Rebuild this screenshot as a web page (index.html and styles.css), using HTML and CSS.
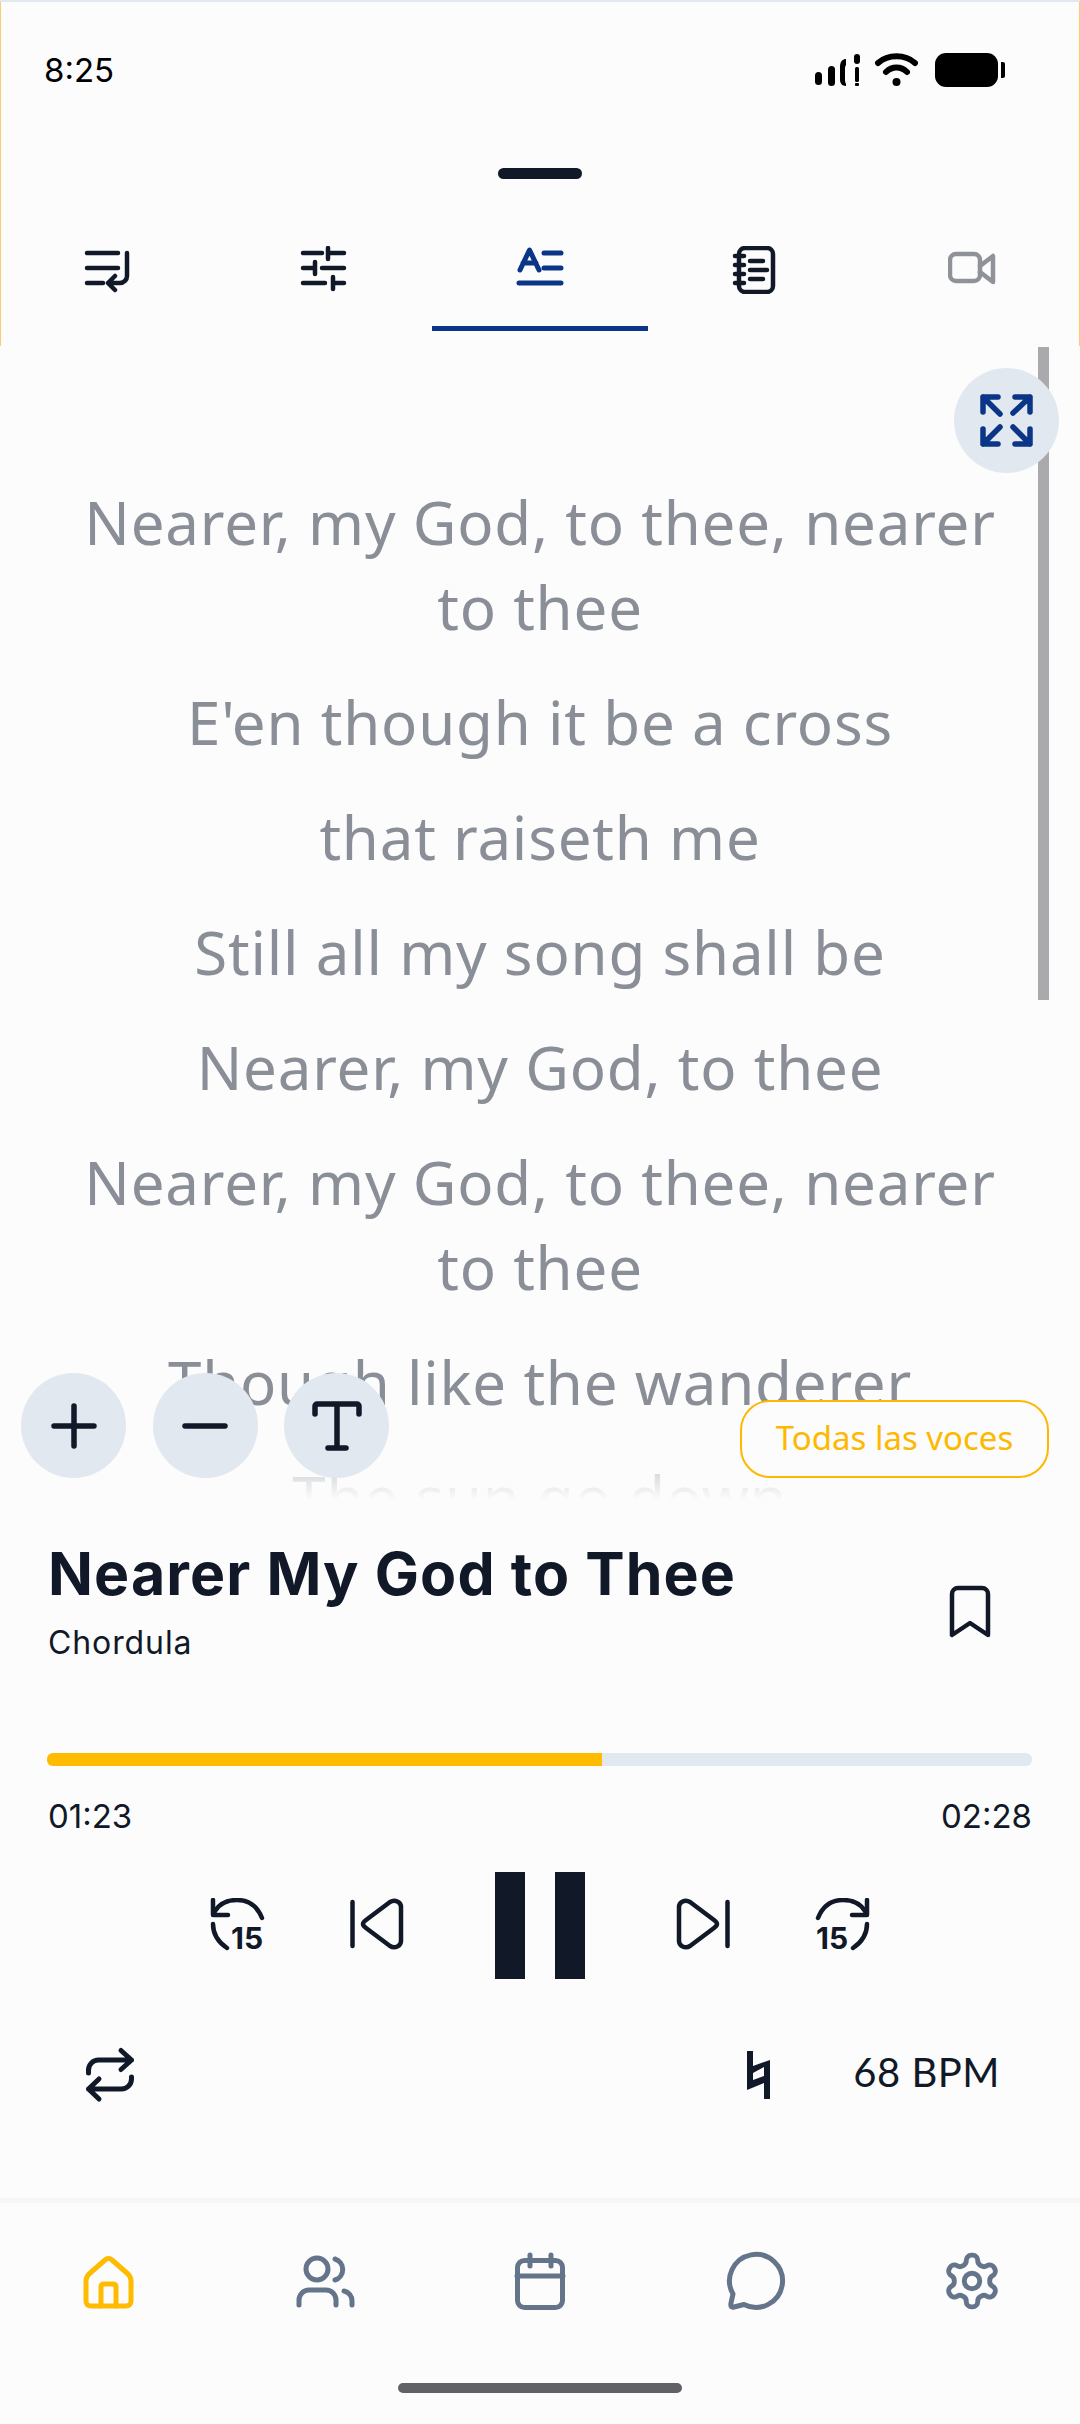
FILE: index.html
```html
<!DOCTYPE html>
<html lang="en">

<head>
    <meta charset="UTF-8">
    <meta name="viewport" content="width=device-width, initial-scale=1.0">
    <title>Nearer My God to Thee</title>
    <link rel="stylesheet" href="styles.css">
</head>

<body>
    <div class="phone">
        <div class="top">
            <div class="status">
                <span class="clock">8:25</span>
                <div class="status-icons">
                    <svg width="46" height="34" viewBox="0 0 46 34" fill="#000">
                        <rect x="1" y="19" width="7" height="13" rx="3.5"/>
                        <rect x="14" y="13" width="7" height="20" rx="3.5"/>
                        <path d="M26 14c0-6 3-8 6-8v6c-1 1-1 3-1 5v9c0 2 0 3 1 5v2c-4 0-6-3-6-6z"/>
                        <rect x="40" y="1" width="6" height="10" rx="3"/>
                        <rect x="41" y="14" width="4" height="15" rx="1.5"/>
                        <rect x="41" y="30" width="4" height="3" rx="1"/>
                    </svg>
                    <svg width="43" height="34" viewBox="0 0 43 34" fill="none" stroke="#000" stroke-linecap="round">
                        <path d="M3 10C13 1 30 1 40 10" stroke-width="6"/>
                        <path d="M11 19C17 13 26 13 32 19" stroke-width="6"/>
                        <circle cx="21.5" cy="29" r="4" fill="#000" stroke="none"/>
                    </svg>
                    <div class="battery"><div class="battery-body"></div><div class="battery-nub"></div></div>
                </div>
            </div>
            <div class="handle"></div>
            <div class="tabs">
                <div class="tab">
                    <svg width="48" height="48" viewBox="0 0 48 48" class="line-icon">
                        <path d="M3 7H34M3 22H34M3 37H19M43 7V30a7 7 0 0 1-7 7H24M31 30l-7 7 7 7"/>
                    </svg>
                </div>
                <div class="tab">
                    <svg width="48" height="48" viewBox="0 0 48 48" class="line-icon">
                        <path d="M3 7H22M28 7H44M28 2V13M3 22H15M15 16V28M22 22H44M3 37H25M33 31V43M33 37H44"/>
                    </svg>
                </div>
                <div class="tab active">
                    <svg width="48" height="48" viewBox="0 0 48 48" class="line-icon blue">
                        <path d="M4 24L13.5 4 23 24M7 17H20M28 7H45M28 22H45M3 37H45"/>
                    </svg>
                </div>
                <div class="tab">
                    <svg width="48" height="48" viewBox="0 0 48 48" class="line-icon">
                        <rect x="7" y="2" width="34" height="44" rx="6"/>
                        <path d="M3 10H12M3 19H12M3 28H12M3 37H12M18 15H31M18 24H35M18 33H31"/>
                    </svg>
                </div>
                <div class="tab">
                    <svg width="48" height="48" viewBox="0 0 48 48" class="line-icon grey">
                        <rect x="2" y="8" width="30" height="27" rx="6"/>
                        <path d="M32 20L45 10V36L32 26"/>
                    </svg>
                </div>
            </div>
        </div>

        <div class="lyrics">
            <div class="lyrics-text">
                <p>Nearer, my God, to thee, nearer to thee</p>
                <p>E'en though it be a cross</p>
                <p>that raiseth me</p>
                <p>Still all my song shall be</p>
                <p>Nearer, my God, to thee</p>
                <p>Nearer, my God, to thee, nearer to thee</p>
                <p>Though like the wanderer</p>
                <p>The sun go down</p>
            </div>
            <div class="fade"></div>
            <div class="scrollbar"></div>
            <div class="round expand">
                <svg width="53" height="53" viewBox="0 0 53 53" fill="none" stroke="#0b3587" stroke-width="5.5" stroke-linecap="round" stroke-linejoin="round">
                    <path d="M3 18V3H18M3 3L20 20M35 3H50V18M50 3L33 19M3 35V50H18M3 50L20 33M35 50H50V35M50 50L33 33"/>
                </svg>
            </div>
            <div class="size-btns">
                <div class="round">
                    <svg width="46" height="46" viewBox="0 0 46 46" class="line-icon thick"><path d="M3 23H43M23 3V43"/></svg>
                </div>
                <div class="round">
                    <svg width="46" height="46" viewBox="0 0 46 46" class="line-icon thick"><path d="M3 23H43"/></svg>
                </div>
                <div class="round">
                    <svg width="52" height="50" viewBox="0 0 52 50" class="line-icon thick"><path d="M4 13V5a2 2 0 0 1 2-2H46a2 2 0 0 1 2 2V13M26 3V47M17 47H35"/></svg>
                </div>
            </div>
            <div class="voices">Todas las voces</div>
        </div>

        <div class="info">
            <div class="info-text">
                <h1>Nearer My God to Thee</h1>
                <div class="artist">Chordula</div>
            </div>
            <svg class="bookmark" width="42" height="53" viewBox="0 0 42 53" fill="none" stroke="#111827" stroke-width="4.5" stroke-linejoin="round">
                <path d="M3 50V9a6 6 0 0 1 6-6H33a6 6 0 0 1 6 6V50L21 38Z"/>
            </svg>
        </div>

        <div class="progress"><div class="progress-fill" style="width: 56.3%"></div></div>
        <div class="times"><span>01:23</span><span>02:28</span></div>

        <div class="controls">
            <svg width="56" height="60" viewBox="0 0 56 60" class="ctrl seek">
                <path d="M3 2V17H18M5 13C10 5 18 2 27 2 40 2 48 10 52 20M3 26C3 36 8 44 17 50"/>
                <text x="21" y="51" class="ctrl-num">15</text>
            </svg>
            <svg width="56" height="52" viewBox="0 0 56 52" class="ctrl skip">
                <path d="M3.5 4V48M17 22L41 4C46 1 52 4 52 9V43C52 48 46 51 41 48L17 30C13 27 13 25 17 22Z"/>
            </svg>
            <div class="pause"><div></div><div></div></div>
            <svg width="56" height="52" viewBox="0 0 56 52" class="ctrl skip">
                <path d="M52.5 4V48M39 22L15 4C10 1 4 4 4 9V43C4 48 10 51 15 48L39 30C43 27 43 25 39 22Z"/>
            </svg>
            <svg width="56" height="60" viewBox="0 0 56 60" class="ctrl seek">
                <path d="M53 2V17H38M51 13C46 5 38 2 29 2 16 2 8 10 4 20M53 26C53 36 48 44 39 50"/>
                <text x="2" y="51" class="ctrl-num">15</text>
            </svg>
        </div>

        <div class="extras">
            <svg width="60" height="60" viewBox="0 0 60 60" class="line-icon repeat">
                <path d="M8.5 28V25a10 10 0 0 1 10-10H51.5M41 5.5l10.5 9.5-10.5 9.5M51.5 32v2a10 10 0 0 1-10 10H8.5M19 34L8.5 44l10.5 10"/>
            </svg>
            <div class="tempo">
                <svg width="23" height="48" viewBox="0 0 23 48" fill="#111827">
                    <path d="M0 0H6V15L23 9V48H17V32L0 39ZM6 22V29L17 25V16Z"/>
                </svg>
                <span>68 BPM</span>
            </div>
        </div>

        <div class="nav">
            <div class="nav-item">
                <svg width="56" height="60" viewBox="0 0 56 60" class="nav-icon home">
                    <path d="M6 30c0-3 1-5 3-7L25 9c2-2 5-2 7 0L48 23c2 2 3 4 3 7V50c0 3-2 5-5 5H11c-3 0-5-2-5-5Z"/>
                    <path d="M21 55V36c0-2 1-3 3-3h9c2 0 3 1 3 3V55"/>
                </svg>
            </div>
            <div class="nav-item">
                <svg width="66" height="62" viewBox="0 0 66 62" class="nav-icon">
                    <circle cx="26" cy="19" r="11"/>
                    <path d="M8 55v-5a10 10 0 0 1 10-10H35a10 10 0 0 1 10 10v5M44 9a11 11 0 0 1 0 21M53 41a10 10 0 0 1 8 10v4"/>
                </svg>
            </div>
            <div class="nav-item">
                <svg width="56" height="64" viewBox="0 0 56 64" class="nav-icon">
                    <rect x="5.5" y="11.5" width="45" height="47" rx="7"/>
                    <path d="M5 27H51M18 6V17M39 6V17"/>
                </svg>
            </div>
            <div class="nav-item">
                <svg width="64" height="64" viewBox="0 0 64 64" class="nav-icon">
                    <path d="M20 55.5A26.5 26.5 0 1 0 9 45L7 54Q6 59 10 58L20 55.5Z"/>
                </svg>
            </div>
            <div class="nav-item">
                <svg width="62" height="62" viewBox="0 0 24 24" class="nav-icon gear">
                    <path d="M12.22 2h-.44a2 2 0 0 0-2 2v.18a2 2 0 0 1-1 1.73l-.43.25a2 2 0 0 1-2 0l-.15-.08a2 2 0 0 0-2.73.73l-.22.38a2 2 0 0 0 .73 2.73l.15.1a2 2 0 0 1 1 1.72v.51a2 2 0 0 1-1 1.74l-.15.09a2 2 0 0 0-.73 2.73l.22.38a2 2 0 0 0 2.73.73l.15-.08a2 2 0 0 1 2 0l.43.25a2 2 0 0 1 1 1.73V20a2 2 0 0 0 2 2h.44a2 2 0 0 0 2-2v-.18a2 2 0 0 1 1-1.73l.43-.25a2 2 0 0 1 2 0l.15.08a2 2 0 0 0 2.73-.73l.22-.39a2 2 0 0 0-.73-2.73l-.15-.08a2 2 0 0 1-1-1.74v-.5a2 2 0 0 1 1-1.74l.15-.09a2 2 0 0 0 .73-2.73l-.22-.38a2 2 0 0 0-2.73-.73l-.15.08a2 2 0 0 1-2 0l-.43-.25a2 2 0 0 1-1-1.73V4a2 2 0 0 0-2-2z"/>
                    <circle cx="12" cy="12" r="3"/>
                </svg>
            </div>
        </div>
        <div class="home-bar"></div>
    </div>
</body>

</html>
```

FILE: styles.css
```css
html,
body {
    margin: 0;
    padding: 0;
}

.phone {
    width: 1080px;
    height: 2424px;
    overflow: hidden;
    background: #fcfcfd;
    color: #111827;
    font-family: Inter, sans-serif;
}

/* top part with status bar and tabs */
.top {
    box-sizing: border-box;
    height: 346px;
    border-top: 2px solid #e2e8f0;
    box-shadow: inset 1px 0 #f7cf72, inset -1px 0 #f7cf72;
}

.status {
    height: 136px;
    display: flex;
    align-items: center;
    justify-content: space-between;
    padding: 0 75px 0 44px;
}

.clock {
    font-size: 33px;
    color: #000;
}

.status-icons {
    display: flex;
    align-items: center;
    gap: 15px;
}

.battery {
    display: flex;
    align-items: center;
    gap: 3px;
    margin-left: 2px;
}

.battery-body {
    width: 63px;
    height: 34px;
    border-radius: 11px;
    background: #000;
}

.battery-nub {
    width: 4px;
    height: 16px;
    border-radius: 0 2px 2px 0;
    background: #000;
}

.handle {
    width: 84px;
    height: 11px;
    margin: 30px auto 0;
    border-radius: 6px;
    background: #111827;
}

.tabs {
    display: grid;
    grid-template-columns: repeat(5, 1fr);
    margin-top: 67px;
}

.tab {
    box-sizing: border-box;
    height: 85px;
    display: flex;
    justify-content: center;
}

.tab.active {
    border-bottom: 5px solid #0b3587;
}

.line-icon {
    fill: none;
    stroke: #111827;
    stroke-width: 4.5;
    stroke-linecap: round;
    stroke-linejoin: round;
}

.line-icon.thick {
    stroke-width: 5.5;
}

.line-icon.repeat {
    stroke-width: 5;
}

.line-icon.blue {
    stroke: #0b3587;
    stroke-width: 5;
}

.line-icon.grey {
    stroke: #8f9399;
}

/* lyrics */
.lyrics {
    position: relative;
    height: 1154px;
}

.lyrics-text {
    height: 100%;
    box-sizing: border-box;
    overflow: hidden;
    padding: 134px 70px 0;
    text-align: center;
    font-family: "Noto Sans", sans-serif;
    font-size: 60px;
    letter-spacing: 0.8px;
    line-height: 85px;
    color: #8a8e96;
}

.lyrics-text p {
    margin: 0 0 30px;
}

.fade {
    position: absolute;
    left: 0;
    right: 0;
    bottom: 0;
    height: 90px;
    background: linear-gradient(rgba(252, 252, 253, 0), #fcfcfd);
}

.scrollbar {
    position: absolute;
    top: 1px;
    left: 1038px;
    width: 11px;
    height: 653px;
    background: #aaaaac;
}

.round {
    width: 105px;
    height: 105px;
    border-radius: 50%;
    background: #e2e8f0;
    display: flex;
    align-items: center;
    justify-content: center;
}

.expand {
    position: absolute;
    top: 22px;
    right: 21px;
}

.size-btns {
    position: absolute;
    top: 1027px;
    left: 21px;
    display: flex;
    gap: 26.5px;
}

.voices {
    position: absolute;
    top: 1054px;
    right: 31px;
    box-sizing: border-box;
    width: 309px;
    height: 78px;
    border: 2px solid #ffb800;
    border-radius: 30px;
    background: #fcfcfd;
    color: #ffb800;
    font-family: "Noto Sans", sans-serif;
    font-size: 33px;
    line-height: 72px;
    text-align: center;
}

/* song info and player */
.info {
    display: flex;
    justify-content: space-between;
    padding: 40px 89px 0 48px;
}

.info h1 {
    margin: 0;
    font-size: 59px;
    font-weight: 700;
    letter-spacing: 1.1px;
    line-height: 68px;
}

.artist {
    margin-top: 13px;
    font-size: 32px;
    letter-spacing: 0.9px;
    line-height: 44px;
}

.bookmark {
    margin-top: 45px;
}

.progress {
    height: 13px;
    margin: 88px 48px 0 47px;
    border-radius: 6px;
    background: #e2e8f0;
    overflow: hidden;
}

.progress-fill {
    height: 100%;
    background: #ffbb00;
}

.times {
    display: flex;
    justify-content: space-between;
    margin-top: 30px;
    padding: 0 48px;
    font-size: 33px;
    line-height: 40px;
}

.controls {
    display: flex;
    justify-content: center;
    align-items: center;
    gap: 83px;
    height: 107px;
    margin-top: 36px;
}

.ctrl {
    fill: none;
    stroke: #111827;
    stroke-width: 4.5;
    stroke-linecap: round;
    stroke-linejoin: round;
}

.ctrl.skip {
    margin-bottom: 4px;
}

.ctrl.seek {
    margin-top: 4px;
}

.ctrl-num {
    fill: #111827;
    stroke: none;
    font-family: Inter, sans-serif;
    font-weight: 700;
    font-size: 30px;
}

.pause {
    display: flex;
    gap: 30px;
    margin: 0 7px;
}

.pause div {
    width: 30px;
    height: 107px;
    background: #111827;
}

.extras {
    display: flex;
    justify-content: space-between;
    align-items: center;
    height: 60px;
    margin-top: 66px;
    padding: 0 80px;
}

.tempo {
    display: flex;
    align-items: center;
    gap: 83px;
    font-family: Lato, sans-serif;
    font-size: 40px;
    letter-spacing: 0.5px;
}

.tempo span {
    margin-bottom: 6px;
}

/* bottom navigation */
.nav {
    display: grid;
    grid-template-columns: repeat(5, 1fr);
    height: 156px;
    margin-top: 93px;
    border-top: 5px solid #f6f6f6;
}

.nav-item {
    display: flex;
    align-items: center;
    justify-content: center;
}

.nav-icon {
    fill: none;
    stroke: #64748b;
    stroke-width: 5;
    stroke-linecap: round;
    stroke-linejoin: round;
}

.nav-icon.home {
    stroke: #ffbb00;
}

.nav-icon.gear {
    stroke-width: 1.9;
}

.home-bar {
    width: 284px;
    height: 10px;
    margin: 24px auto 0;
    border-radius: 5px;
    background: #616266;
}
```
